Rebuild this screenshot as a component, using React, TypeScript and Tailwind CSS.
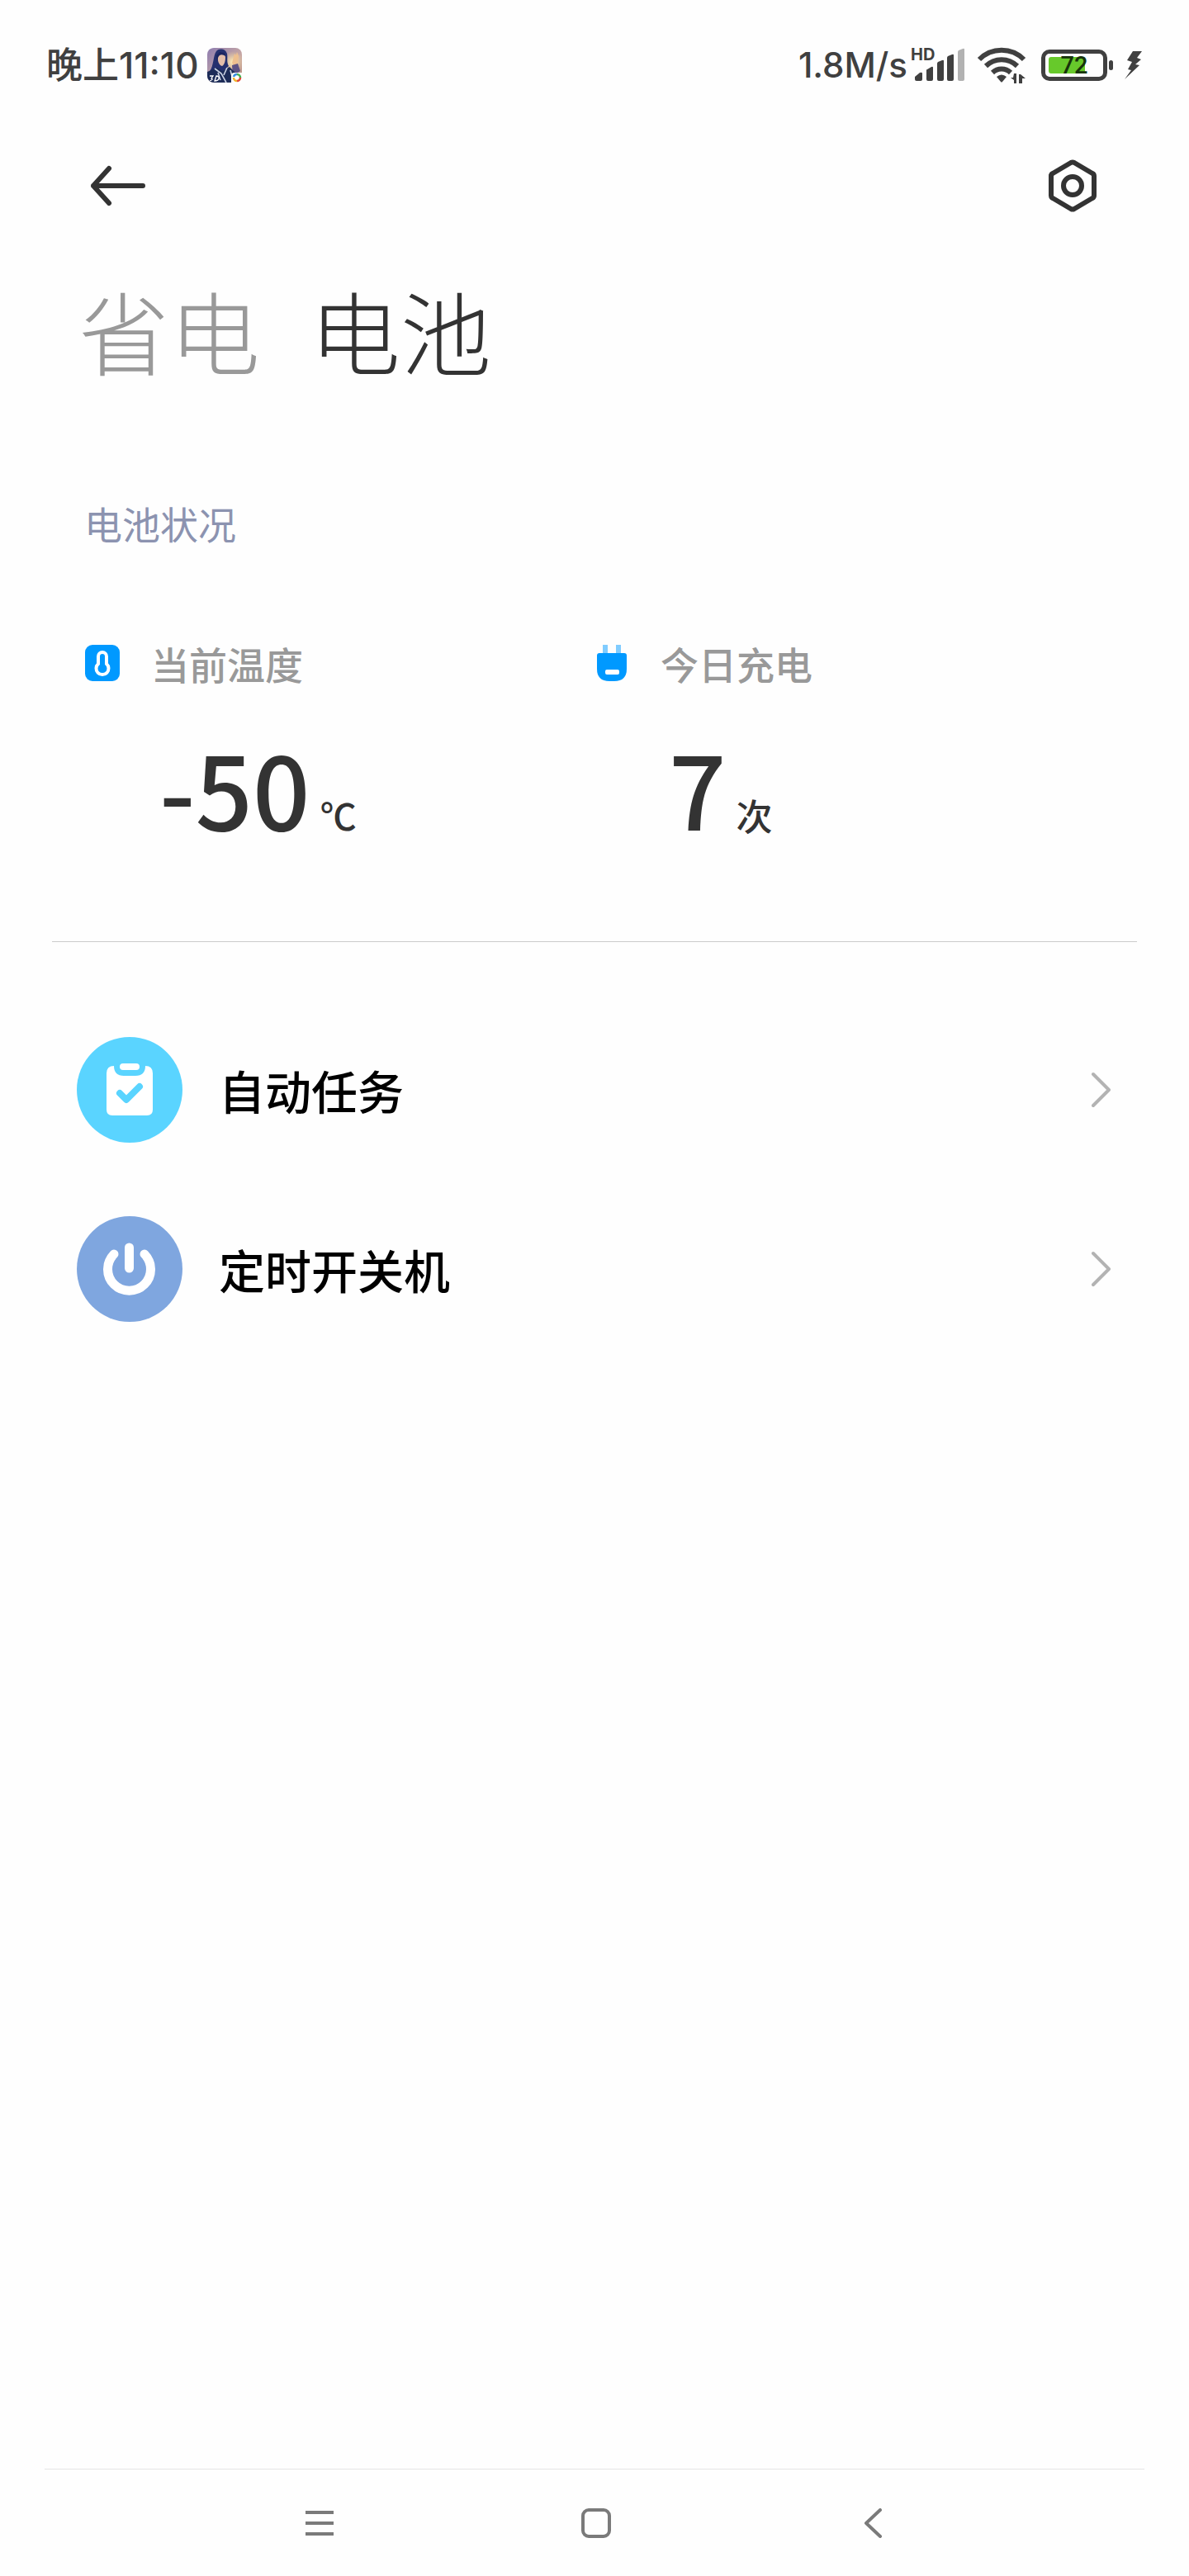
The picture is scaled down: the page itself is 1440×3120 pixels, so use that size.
import type { ReactNode } from "react";

function GameAppIcon() {
  return (
    <svg viewBox="0 0 42 42" className="size-[42px]" aria-hidden="true">
      <defs>
        <clipPath id="game-tile">
          <rect width="42" height="42" rx="8" />
        </clipPath>
        <linearGradient id="game-sky" x1="0" y1="0" x2="1" y2="1">
          <stop offset="0" stopColor="#8d7cb0" />
          <stop offset="0.6" stopColor="#c9a9a4" />
          <stop offset="1" stopColor="#b98f7c" />
        </linearGradient>
        <radialGradient id="game-glow">
          <stop offset="0" stopColor="#fff0b8" />
          <stop offset="1" stopColor="#f3d79b" stopOpacity="0" />
        </radialGradient>
      </defs>
      <g clipPath="url(#game-tile)">
        <rect width="42" height="42" fill="url(#game-sky)" />
        <circle cx="31" cy="17" r="13" fill="url(#game-glow)" />
        <path d="M11 4C15 0 22 1 24 7c1 5-1 10 2 15l-10 9L3 28C8 22 7 9 11 4Z" fill="#25306f" />
        <path d="M13 10c2-4 8-4 9 1 0 5-1 9-4 11-4-1-6-7-5-12Z" fill="#e3bda9" />
        <path d="M13 12c2-5 6-4 9-2l-1-4-6-1-4 4 1 8Z" fill="#1c2560" />
        <path d="M33 7l2 2 1-4 2 5-1 8-4 5-3-5Z" fill="#eec08f" />
        <path d="M30 21l7-2 3 9-9 6Z" fill="#5d5384" />
        <path d="M0 29l12-5 6 4 9-5 9 9 2 11H0Z" fill="#1d2c58" />
        <path d="M9 25l8 6 6 11M24 24l-4 9M28 27l3 11M13 30l3 9" stroke="#cbd3e4" strokeWidth="1.600" fill="none" />
        <path d="M3 34h4l-2 3q3 1-2 3M9 40l2-6c5 0 4 6-2 6Z" stroke="#fff" strokeWidth="1.300" fill="none" />
      </g>
      <path d="M29 42v-8q0-4 4-4h9v12Z" fill="#fff" />
      <g fill="none" strokeWidth="2.600">
        <path d="M32 35a4 4 0 0 1 4-3" stroke="#3a8ee0" />
        <path d="M36 32a4 4 0 0 1 4 4" stroke="#4bb04f" />
        <path d="M40 36a4 4 0 0 1-4 4" stroke="#e04a3a" />
        <path d="M36 40a4 4 0 0 1-4-4" stroke="#f0b52e" />
      </g>
    </svg>
  );
}

function SignalIcon() {
  return (
    <svg viewBox="0 0 64 42" className="h-[42px] w-[64px]" fill="#404040" aria-hidden="true">
      <path d="M1 38v-3l6-5q3-1 3 1v7q0 2-2 2H3q-2 0-2-2Z" />
      <path d="M15 27q0-1 1-1l5-3q2-1 2 1v14q0 2-2 2h-4q-2 0-2-2Z" />
      <path d="M28 19q0-1 1-2l5-2q2-1 2 1v22q0 2-2 2h-4q-2 0-2-2Z" />
      <path d="M40 12q0-1 1-2l5-2q2-1 2 1v29q0 2-2 2h-4q-2 0-2-2Z" />
      <path d="M53 5q0-1 1-2l5-2q2-1 2 1v36q0 2-2 2h-4q-2 0-2-2Z" fill="#b2b2b2" />
    </svg>
  );
}

function WifiIcon() {
  return (
    <svg viewBox="0 0 60 44" className="h-[44px] w-[60px]" aria-hidden="true">
      <g fill="none" stroke="#404040" strokeWidth="6">
        <path d="M3 15a38 38 0 0 1 54 0" />
        <path d="M11 23a27 27 0 0 1 38 0" />
        <path d="M19 31a16 16 0 0 1 22 0" />
      </g>
      <path d="M24 36q6-5 12 0l-5 6q-1 1-2 0Z" fill="#404040" />
      <path d="M48 32v12h-3v-4l-4-3h3l1-5ZM51 44V33h2l6 5h-4v6Z" fill="#404040" />
    </svg>
  );
}

function BatteryIcon() {
  return (
    <div className="relative flex items-center gap-[2px]">
      <div className="flex h-[38px] w-[80px] items-center rounded-[10px] border-[5px] border-[#404040] px-1">
        <div className="h-5 w-11 rounded-[3px] bg-[#67c92b]" />
        <span className="absolute left-0 w-[80px] text-center font-[Roboto] text-[29px] leading-none font-medium text-[#17330a]">72</span>
      </div>
      <div className="h-3 w-[5px] rounded-sm bg-[#404040]" />
    </div>
  );
}

function StatusBar() {
  return (
    <div className="flex h-[158px] items-start justify-between pt-[53px] pr-[57px] pl-14 font-['Inter','Noto_Sans_CJK_SC',sans-serif] text-[#404040]">
      <div className="flex h-[52px] items-center gap-[10px]">
        <span className="text-[44px] leading-[52px] font-medium">晚上11:10</span>
        <GameAppIcon />
      </div>
      <div className="flex h-[52px] items-center">
        <span className="text-[42px] leading-[52px] font-medium">1.8M/s</span>
        <div className="relative ml-2">
          <SignalIcon />
          <span className="absolute top-0 -left-1 text-[20px] leading-[16px] font-bold">HD</span>
        </div>
        <div className="ml-3">
          <WifiIcon />
        </div>
        <div className="ml-[18px]">
          <BatteryIcon />
        </div>
        <svg viewBox="0 0 21 36" className="ml-[14px] h-9 w-[21px]" fill="#404040" aria-hidden="true">
          <path d="M21 1H10L3 12l6 2-5 9 4 1-8 11 18-17-5-1 7-6-5-2Z" />
        </svg>
      </div>
    </div>
  );
}

function Metric({ icon, label, value, unit }: { icon: ReactNode; label: string; value: string; unit: string }) {
  return (
    <div className="flex-1">
      <div className="flex items-center gap-[38px]">
        {icon}
        <span className="text-[46px] leading-[64px] font-medium text-[#999999]">{label}</span>
      </div>
      <div className="flex items-baseline gap-3 pt-11 pl-[90px] text-[#333333]">
        <span className="text-[122px] leading-[148px] font-medium">{value}</span>
        <span className="text-[44px] leading-[60px] font-medium">{unit}</span>
      </div>
    </div>
  );
}

function EntryRow({ icon, label }: { icon: ReactNode; label: string }) {
  return (
    <li>
      <button type="button" className="flex h-[217px] w-full items-center pr-[94px] pl-[93px] text-left">
        {icon}
        <span className="ml-11 flex-1 text-[56px] leading-[80px] font-medium text-black">{label}</span>
        <svg viewBox="0 0 24 44" className="h-11 w-6" fill="none" stroke="#b3b3b3" strokeWidth="4" strokeLinecap="round" strokeLinejoin="round" aria-hidden="true">
          <path d="M2 3l19 19L2 41" />
        </svg>
      </button>
    </li>
  );
}

export default function App() {
  return (
    <div className="flex min-h-screen flex-col bg-[#fefefe] font-['Noto_Sans_CJK_SC',sans-serif]" lang="zh-CN">
      <StatusBar />

      <header className="flex items-center justify-between px-[105px]">
        <button type="button" aria-label="返回" className="flex h-[134px] items-center">
          <svg viewBox="0 0 72 52" className="h-[52px] w-[72px]" fill="none" stroke="#333333" strokeWidth="6" strokeLinecap="round" strokeLinejoin="round" aria-hidden="true">
            <path d="M8 26h60M27 5L8 26l19 21" />
          </svg>
        </button>
        <button type="button" aria-label="设置" className="flex h-[134px] items-center">
          <svg viewBox="0 0 72 72" className="size-[72px]" fill="none" stroke="#333333" strokeWidth="6" strokeLinejoin="round" aria-hidden="true">
            <path d="M34 8q2-1 4 0l22 13q2 1 2 3v24q0 2-2 3l-22 13q-2 1-4 0L12 51q-2-1-2-3V24q0-2 2-3Z" />
            <circle cx="36" cy="36" r="11" />
          </svg>
        </button>
      </header>

      <nav className="flex gap-[60px] px-[95px] pt-[27px]">
        <button type="button" className="text-[110px] leading-[160px] font-light text-[#999999]">省电</button>
        <button type="button" className="text-[110px] leading-[160px] font-light text-[#333333]" aria-current="page">电池</button>
      </nav>

      <main className="flex-1">
        <h2 className="px-[102px] pt-[122px] text-[46px] leading-[64px] text-[#8c93b0]">电池状况</h2>

        <section className="mx-[63px] flex border-b border-[#cccccc] px-10 pt-[106px] pb-[113px]">
          <Metric
            label="当前温度"
            value="-50"
            unit="℃"
            icon={
              <svg viewBox="0 0 42 44" className="h-11 w-[42px]" aria-hidden="true">
                <rect width="42" height="44" rx="9" fill="#0099ff" />
                <path d="M16 14a5 5 0 0 1 10 0v9a7.500 7.500 0 1 1-10 0Z" fill="none" stroke="#fff" strokeWidth="4" />
              </svg>
            }
          />
          <Metric
            label="今日充电"
            value="7"
            unit="次"
            icon={
              <svg viewBox="0 0 42 44" className="h-11 w-[42px]" aria-hidden="true">
                <path d="M10 0h6v12h-6ZM26 0h6v12h-6Z" fill="#80ccff" />
                <path d="M3 13q0-3 3-3h30q3 0 3 3v16q0 15-15 15h-6Q3 44 3 29Z" fill="#0099ff" />
                <rect x="13" y="30" width="17" height="6" rx="2" fill="#fff" />
              </svg>
            }
          />
        </section>

        <ul className="pt-[70px]">
          <EntryRow
            label="自动任务"
            icon={
              <svg viewBox="0 0 128 128" className="size-32" aria-hidden="true">
                <circle cx="64" cy="64" r="64" fill="#5ad4ff" />
                <path d="M45 35q-9 0-9 9v44q0 7 7 7h42q7 0 7-7V44q0-9-9-9 0 12-12 12H57q-12 0-12-12Z" fill="#fff" />
                <rect x="52" y="32" width="24" height="8" rx="4" fill="#fff" />
                <path d="M52 68l8 8 16-16" fill="none" stroke="#5ad4ff" strokeWidth="8" strokeLinecap="round" strokeLinejoin="round" />
              </svg>
            }
          />
          <EntryRow
            label="定时开关机"
            icon={
              <svg viewBox="0 0 128 128" className="size-32" aria-hidden="true">
                <circle cx="64" cy="64" r="64" fill="#7fa6df" />
                <path d="M63.500 38v25M45 46a26 26 0 1 0 37 0" fill="none" stroke="#fff" strokeWidth="11" strokeLinecap="round" />
              </svg>
            }
          />
        </ul>
      </main>

      <footer className="mx-[54px] grid h-[130px] grid-cols-3 items-center border-t border-[#e5e5e5] pr-[162px] pl-[165px]">
        <button type="button" aria-label="最近任务" className="flex justify-center">
          <svg viewBox="0 0 36 36" className="size-9" stroke="#7a7a7a" strokeWidth="4" aria-hidden="true">
            <path d="M1 5h34M1 18h34M1 31h34" />
          </svg>
        </button>
        <button type="button" aria-label="主屏幕" className="flex justify-center">
          <svg viewBox="0 0 36 36" className="size-9" fill="none" stroke="#7a7a7a" strokeWidth="4" aria-hidden="true">
            <rect x="2" y="2" width="32" height="32" rx="7" />
          </svg>
        </button>
        <button type="button" aria-label="后退" className="flex justify-center">
          <svg viewBox="0 0 36 36" className="size-9" fill="none" stroke="#7a7a7a" strokeWidth="4" strokeLinecap="round" strokeLinejoin="round" aria-hidden="true">
            <path d="M27 2L10 18l17 16" />
          </svg>
        </button>
      </footer>
    </div>
  );
}
